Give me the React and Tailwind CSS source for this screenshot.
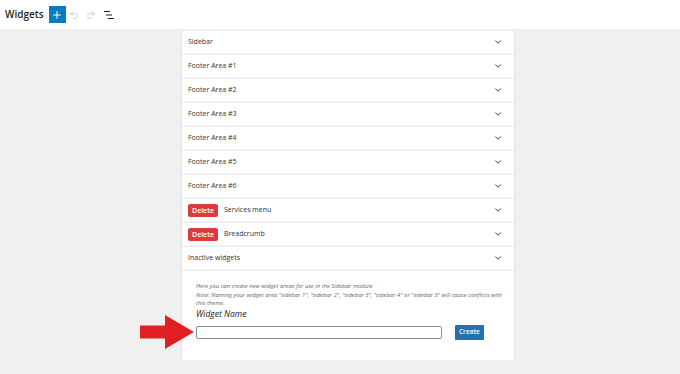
import { ChevronDown, Plus, Undo2, Redo2 } from 'lucide-react';

const rows = [
  { name: 'Sidebar' },
  { name: 'Footer Area #1' },
  { name: 'Footer Area #2' },
  { name: 'Footer Area #3' },
  { name: 'Footer Area #4' },
  { name: 'Footer Area #5' },
  { name: 'Footer Area #6' },
  { name: 'Services menu', del: true },
  { name: 'Breadcrumb', del: true },
  { name: 'Inactive widgets' },
];

function ListIcon() {
  return (
    <svg width="12" height="12" viewBox="0 0 12 12" fill="none" stroke="#1e1e1e" strokeWidth="1.2">
      <path d="M1 2.5h6M3 6h6M5 9.5h6" />
    </svg>
  );
}

// red annotation arrow pointing at the name field
function Arrow() {
  return (
    <svg width="54" height="34" viewBox="0 0 54 34">
      <path d="M0 10.5h25V0l29 17-29 17V23.5H0z" fill="#e02020" />
    </svg>
  );
}

export default function App() {
  return (
    <div className="w-[680px] h-[374px] bg-[#f0f0f0] overflow-hidden font-['Open_Sans',sans-serif] text-[#1e1e1e]">
      {/* top bar */}
      <div className="h-[29px] bg-white flex items-center pl-[5px]">
        <h1 className="text-[10px] font-semibold mr-[5px]">Widgets</h1>
        <div className="w-[17px] h-[17px] bg-[#0a7cc0] flex items-center justify-center">
          <Plus size={12} color="white" strokeWidth={2} />
        </div>
        <div className="flex items-center gap-[7px] ml-[3px]">
          <Undo2 size={10} color="#c8c8c8" />
          <Redo2 size={10} color="#c8c8c8" />
          <ListIcon />
        </div>
      </div>

      {/* widget area column */}
      <div className="ml-[181px] w-[334px] border-x border-[#e2e2e2] pt-[2px] flex flex-col gap-[2px]">
        {rows.map((r) => (
          <div key={r.name} className="h-[22px] bg-white flex items-center pl-[6px] pr-[11px]">
            {r.del && (
              <span className="bg-[#dc3b3b] text-white text-[7px] font-semibold px-[4px] h-[13px] leading-[13px] rounded-[2px] mr-[6px]">
                Delete
              </span>
            )}
            <span className="text-[7px] text-[#333] flex-1">{r.name}</span>
            <ChevronDown size={10} color="#333" strokeWidth={2.2} />
          </div>
        ))}
        <div className="h-[89px] bg-white pl-[14px] pt-[11px]">
          <p className="text-[5.9px] italic text-[#666] leading-[8.5px]">
            Here you can create new widget areas for use in the Sidebar module
            <br />
            Note: Naming your widget area "sidebar 1", "sidebar 2", "sidebar 3", "sidebar 4" or "sidebar 5" will cause conflicts with
            <br />
            this theme.
          </p>
          <div className="text-[8.5px] italic font-medium text-[#222] leading-[11px]">Widget Name</div>
          <div className="relative flex items-center mt-[6px]">
            <div className="absolute left-[-56px] top-[-10px]">
              <Arrow />
            </div>
            <div className="w-[246px] h-[13px] border border-[#8c8f94] rounded-[2px] bg-white" />
            <button className="ml-[13px] h-[15px] px-[4px] bg-[#2271b1] text-white text-[6.5px] font-semibold rounded-[1px]">
              Create
            </button>
          </div>
        </div>
      </div>
    </div>
  );
}
